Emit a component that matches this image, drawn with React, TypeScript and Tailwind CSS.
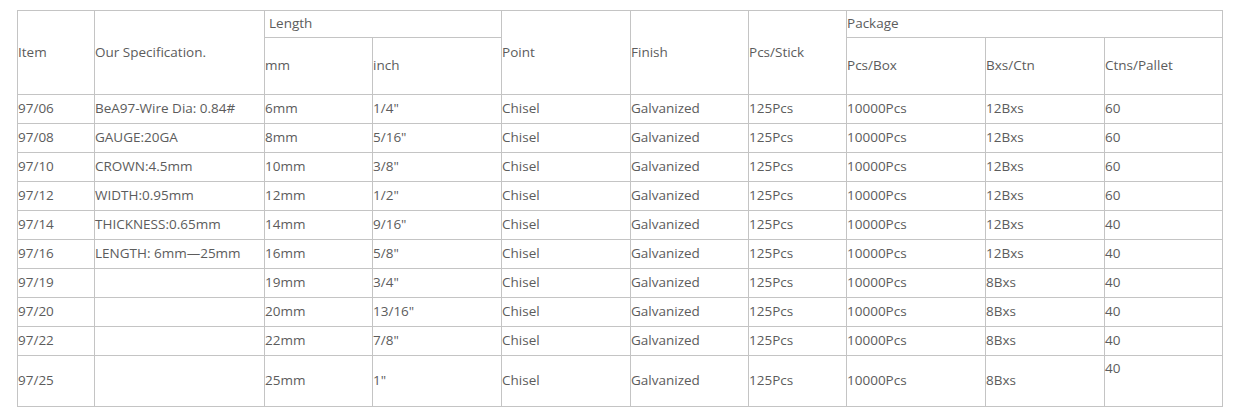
import React from 'react';

const rows = [
  ['97/06', 'BeA97-Wire Dia: 0.84#', '6mm', '1/4"', '12Bxs', '60'],
  ['97/08', 'GAUGE:20GA', '8mm', '5/16"', '12Bxs', '60'],
  ['97/10', 'CROWN:4.5mm', '10mm', '3/8"', '12Bxs', '60'],
  ['97/12', 'WIDTH:0.95mm', '12mm', '1/2"', '12Bxs', '60'],
  ['97/14', 'THICKNESS:0.65mm', '14mm', '9/16"', '12Bxs', '40'],
  ['97/16', 'LENGTH: 6mm\u201425mm', '16mm', '5/8"', '12Bxs', '40'],
  ['97/19', '', '19mm', '3/4"', '8Bxs', '40'],
  ['97/20', '', '20mm', '13/16"', '8Bxs', '40'],
  ['97/22', '', '22mm', '7/8"', '8Bxs', '40'],
];

const colWidths = [77, 170, 108, 129, 129, 118, 98, 139, 119, 118];

const cell = 'border border-[#c4c4c4] px-0 pt-0 pb-[2px] align-middle text-left font-normal';

const App = () => {
  return (
    <div className="bg-white w-[1242px] h-[418px] pt-[10px] pl-[17px] font-['Open_Sans',sans-serif] text-[13.5px] text-[#5c5c5c]">
      <table className="border-collapse table-fixed w-[1206px] leading-[22px]">
        <colgroup>
          {colWidths.map((w, i) => (
            <col key={i} style={{ width: w }} />
          ))}
        </colgroup>
        <thead>
          <tr className="h-[27px]">
            <th rowSpan={2} className={cell}>Item</th>
            <th rowSpan={2} className={cell}>Our Specification.</th>
            <th colSpan={2} className={`${cell} pl-[4px]`}>Length</th>
            <th rowSpan={2} className={cell}>Point</th>
            <th rowSpan={2} className={cell}>Finish</th>
            <th rowSpan={2} className={cell}>Pcs/Stick</th>
            <th colSpan={3} className={cell}>Package</th>
          </tr>
          <tr className="h-[57px]">
            <th className={cell}>mm</th>
            <th className={cell}>inch</th>
            <th className={cell}>Pcs/Box</th>
            <th className={cell}>Bxs/Ctn</th>
            <th className={cell}>Ctns/Pallet</th>
          </tr>
        </thead>
        <tbody>
          {rows.map(r => (
            <tr key={r[0]} className="h-[29px]">
              <td className={cell}>{r[0]}</td>
              <td className={cell}>{r[1]}</td>
              <td className={cell}>{r[2]}</td>
              <td className={cell}>{r[3]}</td>
              <td className={cell}>Chisel</td>
              <td className={cell}>Galvanized</td>
              <td className={cell}>125Pcs</td>
              <td className={cell}>10000Pcs</td>
              <td className={cell}>{r[4]}</td>
              <td className={cell}>{r[5]}</td>
            </tr>
          ))}
          <tr className="h-[51px]">
            <td className={cell}>97/25</td>
            <td className={cell}></td>
            <td className={cell}>25mm</td>
            <td className={cell}>1"</td>
            <td className={cell}>Chisel</td>
            <td className={cell}>Galvanized</td>
            <td className={cell}>125Pcs</td>
            <td className={cell}>10000Pcs</td>
            <td className={cell}>8Bxs</td>
            <td className={`${cell} !align-top !pt-[1px]`}>40</td>
          </tr>
        </tbody>
      </table>
    </div>
  );
};

export default App;
